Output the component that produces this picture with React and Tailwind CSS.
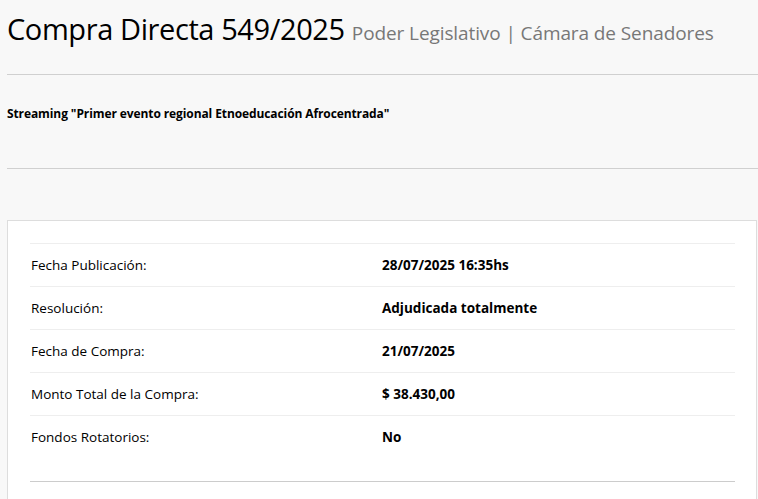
import React from 'react';

const rows = [
  { label: 'Fecha Publicación:', value: '28/07/2025 16:35hs' },
  { label: 'Resolución:', value: 'Adjudicada totalmente' },
  { label: 'Fecha de Compra:', value: '21/07/2025' },
  { label: 'Monto Total de la Compra:', value: '$ 38.430,00' },
  { label: 'Fondos Rotatorios:', value: 'No' },
];

const App = () => {
  return (
    <div className="min-h-[499px] bg-[#f8f8f8] pl-[7px] text-black font-['Open_Sans',sans-serif]">
      <h1 className="pt-[11px] text-[29px] leading-[36px] tracking-[-0.4px] whitespace-nowrap">
        Compra Directa 549/2025{' '}
        <small className="text-[19px] tracking-[-0.1px] text-[#777]">Poder Legislativo | Cámara de Senadores</small>
      </h1>
      <hr className="mt-[23px] border-t border-[#d0d0d0]" />

      <p className="mt-[30px] text-[12px] leading-[17px] font-bold tracking-[-0.1px]">
        Streaming "Primer evento regional Etnoeducación Afrocentrada"
      </p>
      <hr className="mt-[46px] border-t border-[#d0d0d0]" />

      <div className="mt-[51px] mr-px bg-white border border-[#dddddd] pt-[22px] pl-[22px] pr-[21px] pb-[20px]">
        <table className="w-full text-[13.5px]">
          <tbody>
            {rows.map((row) => (
              <tr key={row.label} className="border-t border-[#eeeeee] h-[43px]">
                <td className="w-[352px] pl-px align-middle">{row.label}</td>
                <td className="font-bold align-middle">{row.value}</td>
              </tr>
            ))}
          </tbody>
        </table>
        <hr className="mt-[22px] border-t border-[#cccccc]" />
      </div>
    </div>
  );
};

export default App;
